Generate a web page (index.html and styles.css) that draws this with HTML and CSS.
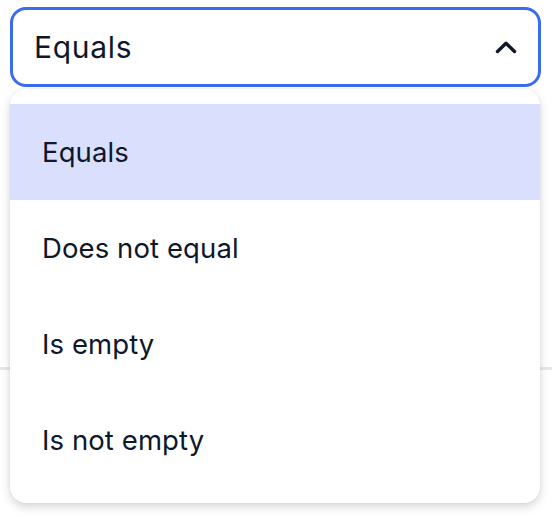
FILE: index.html
```html
<!DOCTYPE html>
<html>
<head>
<meta charset="utf-8">
<link rel="stylesheet" href="styles.css">
</head>
<body>
<div class="page">
  <div class="field">
    <div class="select">
      <span class="value">Equals</span>
      <svg class="chevron" width="22" height="14" viewBox="0 0 22 14"><path d="M2.5 11.5 L11 3.2 L19.5 11.5" fill="none" stroke="#111827" stroke-width="3.4" stroke-linecap="round" stroke-linejoin="round"/></svg>
    </div>
    <ul class="menu">
      <li class="item active">Equals</li>
      <li class="item">Does not equal</li>
      <li class="item">Is empty</li>
      <li class="item">Is not empty</li>
    </ul>
  </div>
  <div class="behind"></div>
</div>
</body>
</html>
```
FILE: styles.css
```css
html, body {
  margin: 0;
  padding: 0;
  background: #ffffff;
}
body {
  font-family: Inter, "Noto Sans", sans-serif;
  color: #0f172a;
}
.page {
  box-sizing: border-box;
  min-height: 520px;
  padding: 7px 11px 0 10px;
}
.field {
  position: relative;
  z-index: 2;
}
.select {
  box-sizing: border-box;
  height: 80px;
  border: 3px solid #3b6cf0;
  border-radius: 16px;
  display: flex;
  align-items: center;
  justify-content: space-between;
  padding: 0 21px 0 21px;
  background: #fff;
}
.value {
  font-size: 30px;
  letter-spacing: 0.7px;
}
.chevron {
  display: block;
}
.behind {
  height: 280px;
  margin: 0 -11px 0 -10px;
  border-bottom: 3px solid #e7e8ec;
}
.menu {
  position: absolute;
  top: 82px;
  left: 0;
  right: 1px;
  margin: 0;
  padding: 15px 0;
  list-style: none;
  background: #fff;
  border-radius: 16px;
  box-shadow: 0 4px 10px rgba(0,0,0,0.16), 0 0 3px rgba(0,0,0,0.06);
}
.item {
  height: 96px;
  display: flex;
  align-items: center;
  padding-left: 32px;
  font-size: 27.5px;
  letter-spacing: 0.1px;
}
.item.active {
  background: #d9dffd;
}
```
